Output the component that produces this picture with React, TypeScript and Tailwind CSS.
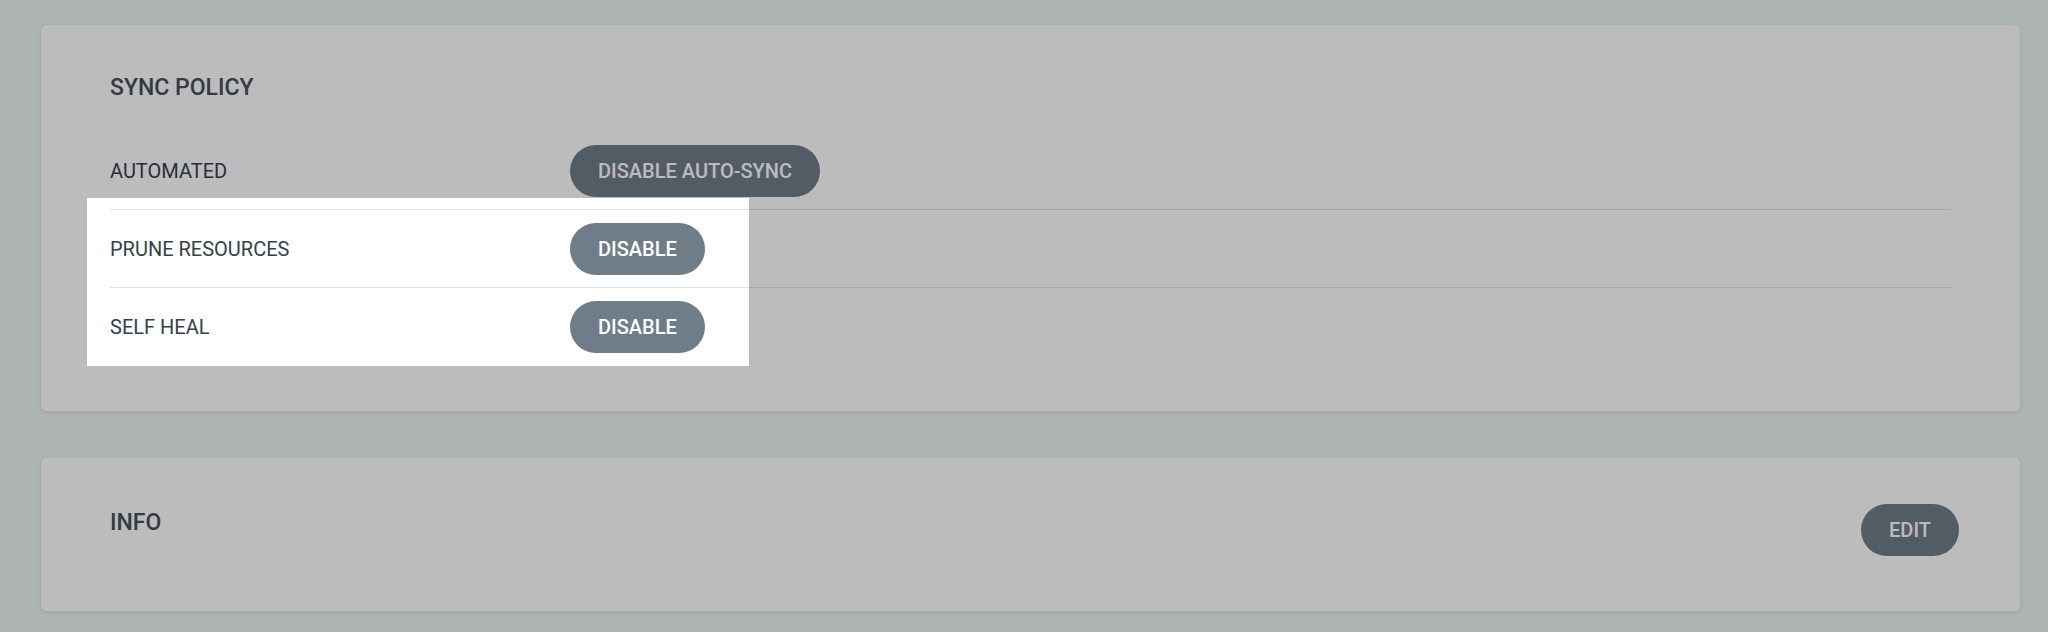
import React from "react";

const font = { fontFamily: "Roboto, 'Liberation Sans', sans-serif" };

function PillButton({ children }: { children: React.ReactNode }) {
  return (
    <button className="h-[52px] rounded-full bg-[#6f7d89] px-[28px] text-[20px] font-medium leading-none text-white">
      {children}
    </button>
  );
}

function Row({ label, action, last }: { label: string; action: string; last?: boolean }) {
  return (
    <div className={`flex h-[78px] items-center ${last ? "" : "border-b border-[#dee4ea]"}`}>
      <div className="w-[460px] text-[20px] leading-none text-[#363f4a]">{label}</div>
      <PillButton>{action}</PillButton>
    </div>
  );
}

export default function App() {
  return (
    <div className="relative min-h-[632px] overflow-hidden bg-[#edf3f4] pl-[41px] pr-[28px] pt-[25px]" style={font}>
      <div className="flex flex-col gap-[47px]">
        <section className="rounded-[5px] bg-white px-[69px] pb-[45px] pt-[52px] shadow-[0_1px_4px_rgba(0,0,0,0.12)]">
          <h4 className="text-[23px] font-medium leading-[22px] text-[#46515d]">SYNC POLICY</h4>
          <div className="mt-[33px]">
            <Row label="AUTOMATED" action="DISABLE AUTO-SYNC" />
            <Row label="PRUNE RESOURCES" action="DISABLE" />
            <Row label="SELF HEAL" action="DISABLE" last />
          </div>
        </section>
        <section className="flex h-[153px] items-start justify-between rounded-[5px] bg-white pl-[69px] pr-[61px] pt-[46px] shadow-[0_1px_4px_rgba(0,0,0,0.12)]">
          <h4 className="mt-[8px] text-[23px] font-medium leading-[22px] text-[#46515d]">INFO</h4>
          <PillButton>EDIT</PillButton>
        </section>
      </div>
      {/* tour spotlight overlay */}
      <div className="pointer-events-none absolute left-[87px] top-[198px] h-[168px] w-[662px] shadow-[0_0_0_4000px_rgba(0,0,0,0.263)]" />
    </div>
  );
}
